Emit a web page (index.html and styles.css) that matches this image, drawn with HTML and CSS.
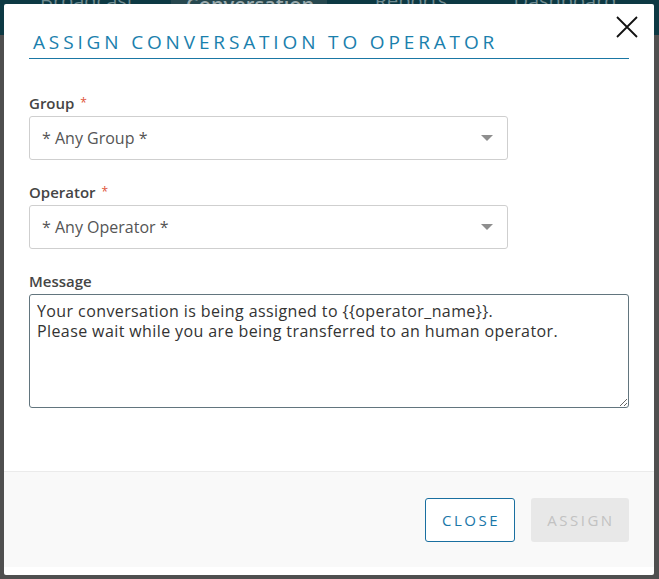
FILE: index.html
```html
<!DOCTYPE html>
<html>
<head>
<meta charset="utf-8">
<link rel="stylesheet" href="styles.css">
</head>
<body>
<div class="nav">
  <div class="nav-item">Broadcast</div>
  <div class="nav-item active">Conversation</div>
  <div class="nav-item">Reports</div>
  <div class="nav-item">Dashboard</div>
</div>
<div class="page-rest"></div>

<div class="modal">
  <button class="close-x" aria-label="Close">
    <svg width="22" height="22" viewBox="0 0 22 22"><path d="M1 1 L21 21 M21 1 L1 21" stroke="#111" stroke-width="1.8" fill="none"/></svg>
  </button>
  <div class="modal-body">
    <h2 class="title">ASSIGN CONVERSATION TO OPERATOR</h2>
    <div class="field">
      <label class="label">Group <span class="req">*</span></label>
      <div class="select"><span>* Any Group *</span><i class="caret"></i></div>
    </div>
    <div class="field">
      <label class="label">Operator <span class="req">*</span></label>
      <div class="select"><span>* Any Operator *</span><i class="caret"></i></div>
    </div>
    <div class="field">
      <label class="label">Message</label>
      <textarea class="message">Your conversation is being assigned to {{operator_name}}.
Please wait while you are being transferred to an human operator.</textarea>
    </div>
  </div>
  <div class="modal-footer">
    <button class="btn btn-close">CLOSE</button>
    <button class="btn btn-assign" disabled>ASSIGN</button>
  </div>
</div>
</body>
</html>
```
FILE: styles.css
```css
html, body {
  margin: 0;
  padding: 0;
  height: 100%;
  background: #4f4f4f;
  font-family: "Open Sans", "Liberation Sans", sans-serif;
  overflow: hidden;
}
.nav {
  height: 35px;
  background: #0d3943;
  display: flex;
  padding-left: 10px;
}
.nav-item {
  color: #6f8a90;
  font-size: 20px;
  line-height: 10px;
  padding: 0 15px;
  width: 124px;
  text-align: center;
  margin-top: -4px;
}
.nav-item.active {
  background: #27484f;
  color: #9aaaad;
  font-weight: 600;
  width: 126px;
  margin: 0 7px;
}
.modal {
  position: absolute;
  left: 4px;
  top: 4px;
  width: 650px;
  height: 571px;
  background: #fff;
  border-radius: 2px;
  display: flex;
  flex-direction: column;
  box-sizing: border-box;
  padding-bottom: 8px;
}
.close-x {
  position: absolute;
  right: 16px;
  top: 12px;
  border: 0;
  background: none;
  padding: 0;
  width: 22px;
  height: 22px;
}
.close-x svg { display: block; }
.modal-body {
  padding: 26px 25px 0 25px;
  flex: 1;
}
.title {
  margin: 0 0 34px 0;
  font-weight: 400;
  font-size: 19px;
  line-height: 24px;
  letter-spacing: 3.85px;
  color: #1a80ad;
  padding: 0 0 4px 4px;
  border-bottom: 1px solid #1a77a4;
}
.field {
  display: flex;
  flex-direction: column;
  margin-bottom: 22px;
}
.label {
  font-size: 15px;
  line-height: 20px;
  font-weight: 600;
  color: #454545;
  margin-bottom: 3px;
}
.req {
  color: #e0533a;
  font-size: 12px;
  font-weight: 400;
  vertical-align: top;
  margin-left: 2px;
}
.select {
  width: 479px;
  height: 44px;
  box-sizing: border-box;
  border: 1px solid #cfcfcf;
  border-radius: 3px;
  display: flex;
  align-items: center;
  justify-content: space-between;
  padding: 0 14px 0 12px;
  font-size: 16px;
  color: #555;
}
.caret {
  width: 0;
  height: 0;
  border-left: 6px solid transparent;
  border-right: 6px solid transparent;
  border-top: 6px solid #8e8e8e;
}
.message {
  width: 600px;
  height: 114px;
  box-sizing: border-box;
  border: 1px solid #62757e;
  border-radius: 3px;
  padding: 6px 7px 4px 7px;
  font-family: "Open Sans", "Liberation Sans", sans-serif;
  font-size: 16px;
  letter-spacing: 0.4px;
  line-height: 20px;
  color: #333;
  resize: vertical;
  outline: none;
}
.modal-footer {
  height: 96px;
  box-sizing: border-box;
  background: #f9f9f9;
  border-top: 1px solid #ebebeb;
  display: flex;
  justify-content: flex-end;
  align-items: center;
  gap: 16px;
  padding: 0 25px 0 0;
}
.btn {
  height: 44px;
  box-sizing: border-box;
  border-radius: 3px;
  font-family: "Open Sans", "Liberation Sans", sans-serif;
  font-size: 15px;
  letter-spacing: 2.5px;
  padding: 0 0 0 2px;
}
.btn-close {
  width: 90px;
  background: #fff;
  border: 1px solid #1a6fa0;
  color: #1a77a8;
}
.btn-assign {
  width: 98px;
  background: #e8e8e8;
  border: 0;
  color: #c2c2c2;
}
```
